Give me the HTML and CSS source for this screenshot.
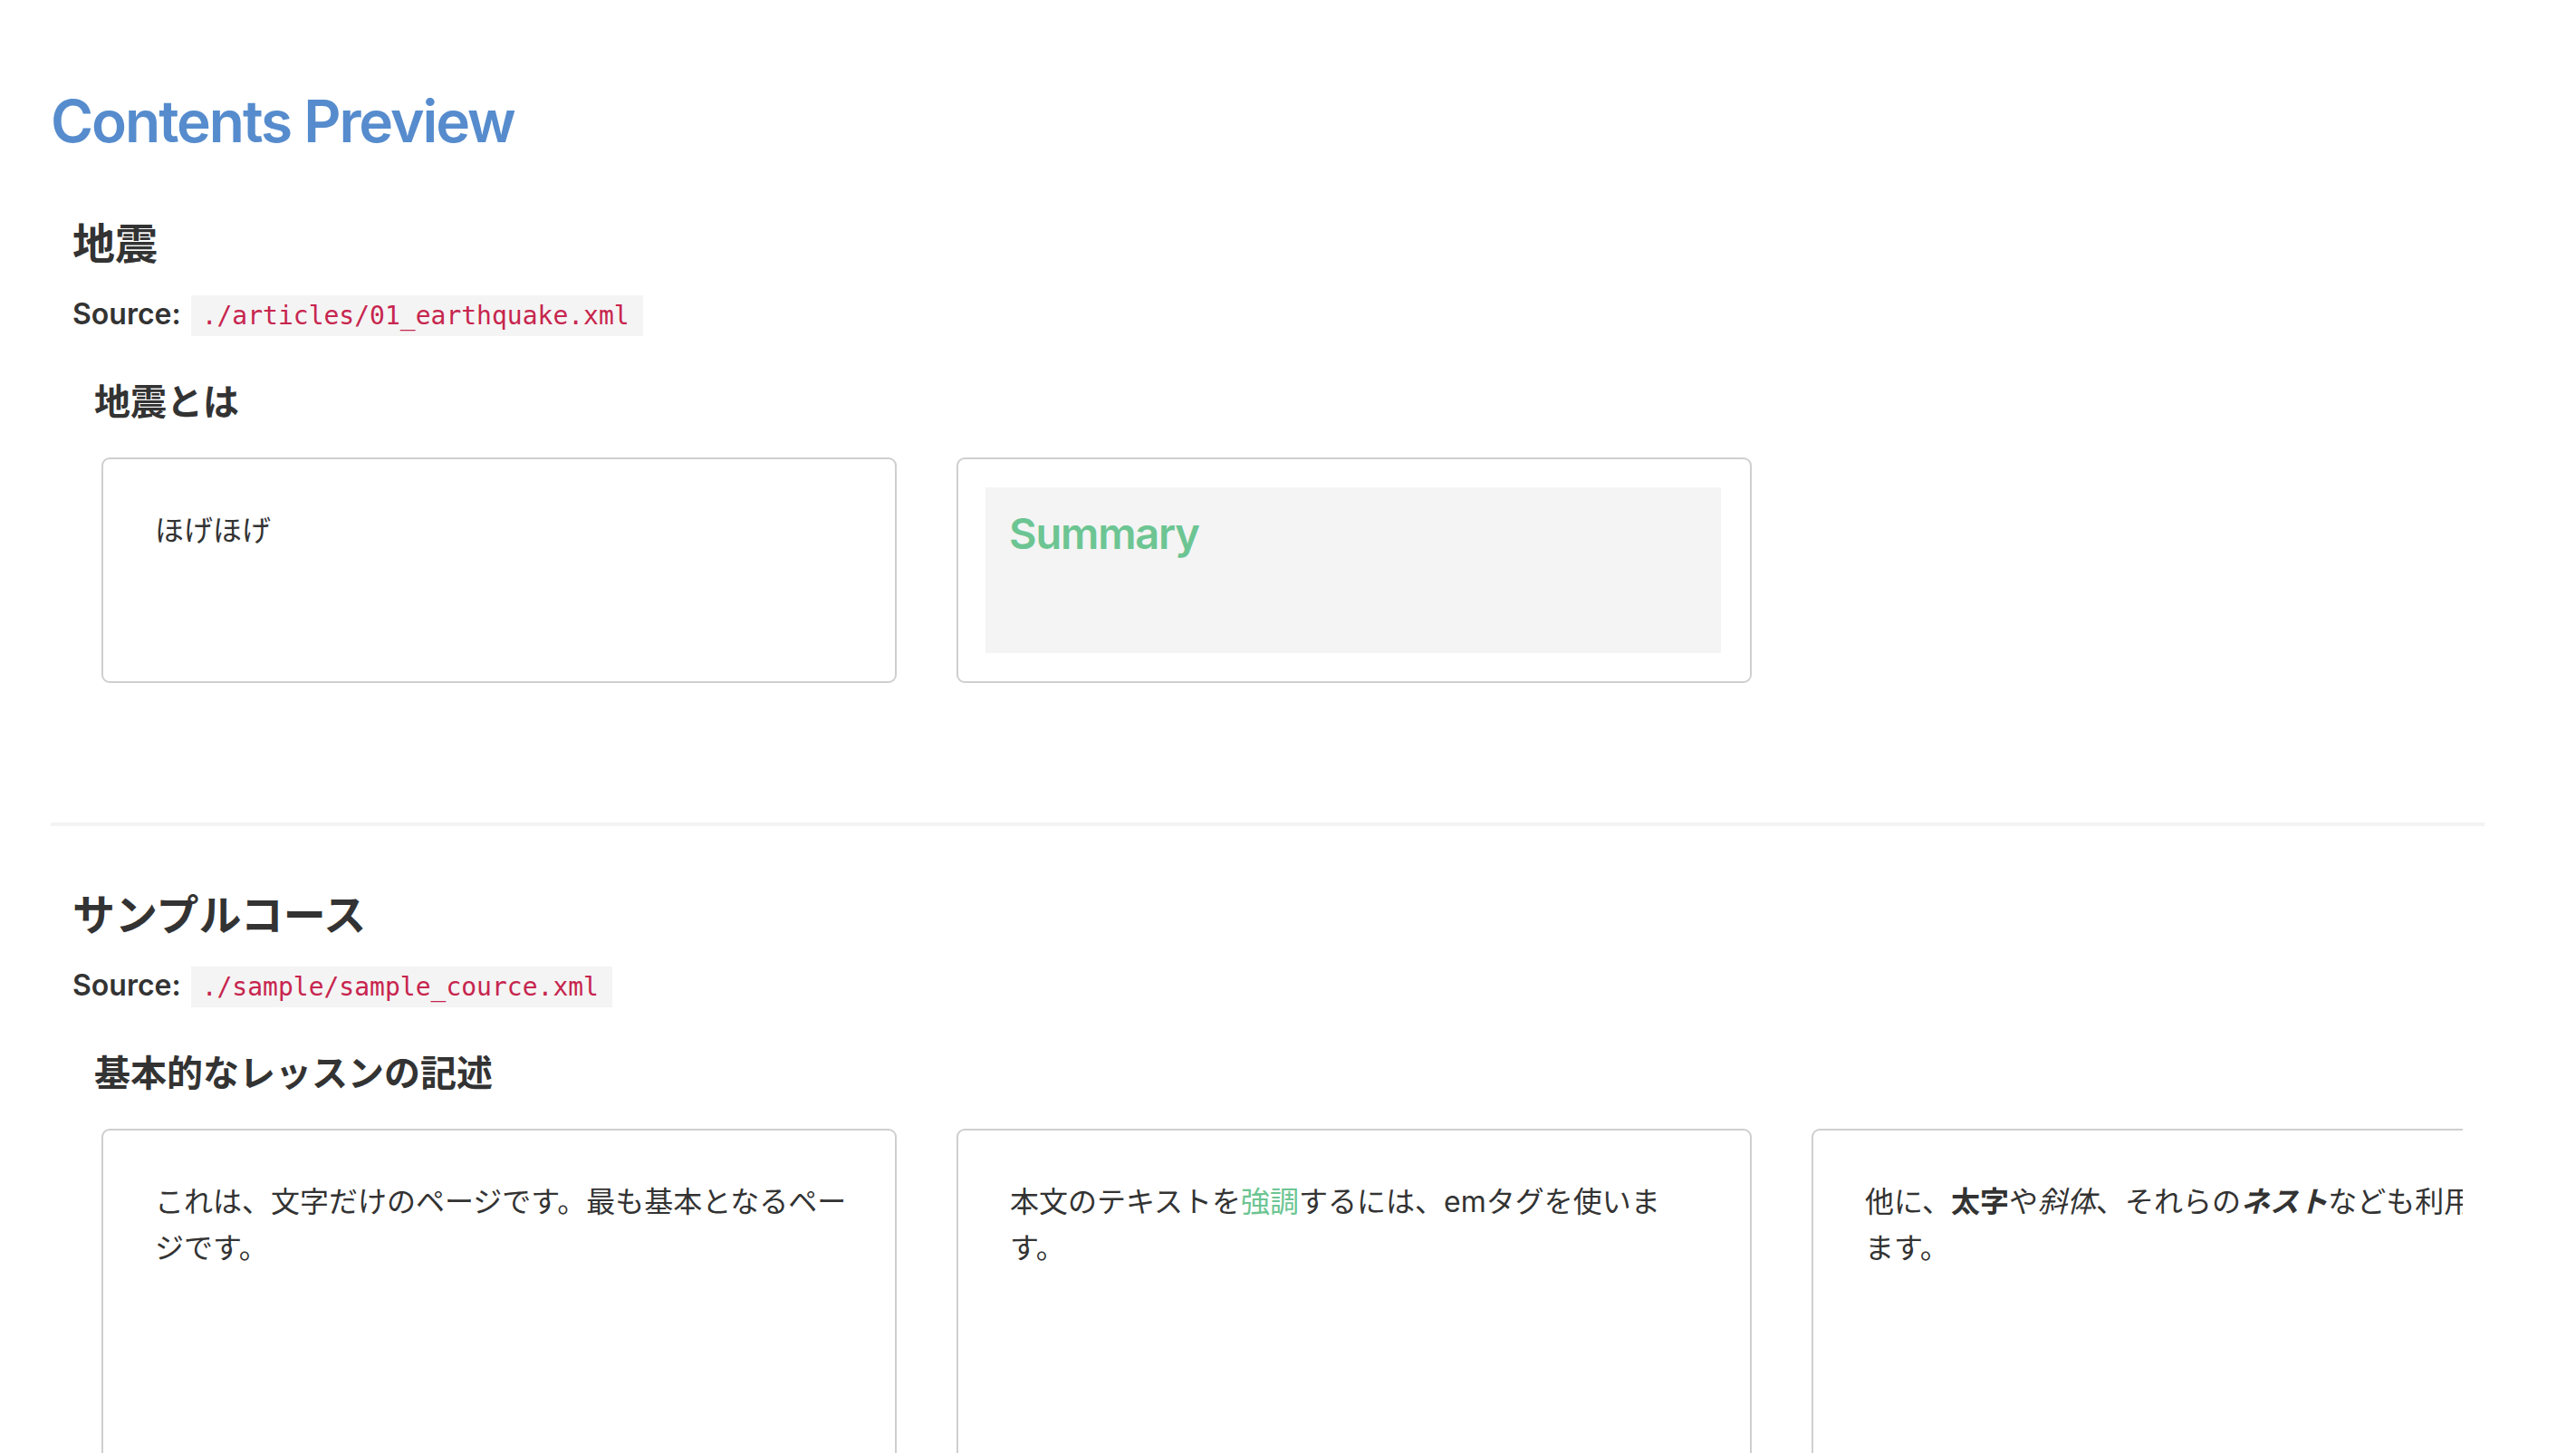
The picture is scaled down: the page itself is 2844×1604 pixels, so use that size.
FILE: index.html
```html
<!DOCTYPE html>
<html lang="ja">
<head>
<meta charset="utf-8">
<title>Contents Preview</title>
<link rel="stylesheet" href="styles.css">
</head>
<body>
<h1 class="page-title">Contents Preview</h1>

<section class="course">
  <h2 class="course-title">地震</h2>
  <div class="source"><span class="source-label">Source:</span><code class="source-path">./articles/01_earthquake.xml</code></div>
  <div class="lesson">
    <h3 class="lesson-title">地震とは</h3>
    <div class="cards">
      <div class="card"><p>ほげほげ</p></div>
      <div class="card card-summary"><div class="summary-box"><h2 class="summary-title">Summary</h2></div></div>
    </div>
  </div>
</section>

<hr class="divider">

<section class="course">
  <h2 class="course-title">サンプルコース</h2>
  <div class="source"><span class="source-label">Source:</span><code class="source-path">./sample/sample_cource.xml</code></div>
  <div class="lesson">
    <h3 class="lesson-title">基本的なレッスンの記述</h3>
    <div class="cards cards-tall">
      <div class="card"><p>これは、文字だけのページです。最も基本となるページです。</p></div>
      <div class="card"><p>本文のテキストを<em class="emph">強調</em>するには、emタグを使います。</p></div>
      <div class="card"><p>他に、<b>太字</b>や<i>斜体</i>、それらの<b><i>ネスト</i></b>なども利用でき<br>ます。</p></div>
    </div>
  </div>
</section>
</body>
</html>
```

FILE: styles.css
```css
html, body {
  background: #ffffff;
}

body {
  margin: 0;
  padding: 96px 101px 0 56px;
  font-family: Inter, "Noto Sans CJK JP", sans-serif;
  color: #333333;
  overflow: hidden;
}

.page-title {
  margin: 0;
  font-size: 64px;
  line-height: 1.2;
  font-weight: 600;
  color: #568ccd;
  letter-spacing: -0.032em;
}

.course {
  padding: 67px 24px 0;
}

.course-title {
  margin: 0;
  font-size: 47px;
  line-height: 1.22;
  font-weight: 700;
  color: #333333;
}

.source {
  display: flex;
  align-items: baseline;
  gap: 11px;
  margin-top: 26px;
}

.source-label {
  font-size: 32px;
  line-height: 48px;
  font-weight: 600;
  color: #333333;
}

.source-path {
  display: inline-block;
  font-family: "DejaVu Sans Mono", "Liberation Mono", monospace;
  font-size: 28px;
  line-height: 33px;
  padding: 6px 15px 6px 12px;
  background: #f4f4f4;
  color: #c7254e;
}

.lesson-title {
  margin: 49px 0 0 24px;
  font-size: 40px;
  line-height: 1.2;
  font-weight: 700;
  color: #333333;
}

.cards {
  display: flex;
  gap: 66px;
  margin: 37px 0 0 32px;
  overflow: hidden;
}

.card {
  flex: 0 0 878px;
  box-sizing: border-box;
  border: 2px solid #cfcfcf;
  border-radius: 9px;
  padding: 54px 46px 54px 57px;
  background: #ffffff;
}

.cards-tall .card {
  min-height: 420px;
}

.card p {
  margin: 0;
  font-size: 32px;
  line-height: 1.58;
  color: #333333;
}

.card-summary {
  padding: 31px 32px 31px 30px;
}

.summary-box {
  box-sizing: border-box;
  height: 183px;
  padding: 23px 26px;
  background: #f4f4f4;
}

.summary-title {
  margin: 0;
  font-size: 47px;
  line-height: 1.2;
  font-weight: 600;
  letter-spacing: -0.025em;
  color: #6cc592;
}

.emph {
  font-style: normal;
  color: #6cc592;
}

.divider {
  margin: 154px 0 2px;
  border: 0;
  height: 4px;
  background: #f3f3f3;
}
```
